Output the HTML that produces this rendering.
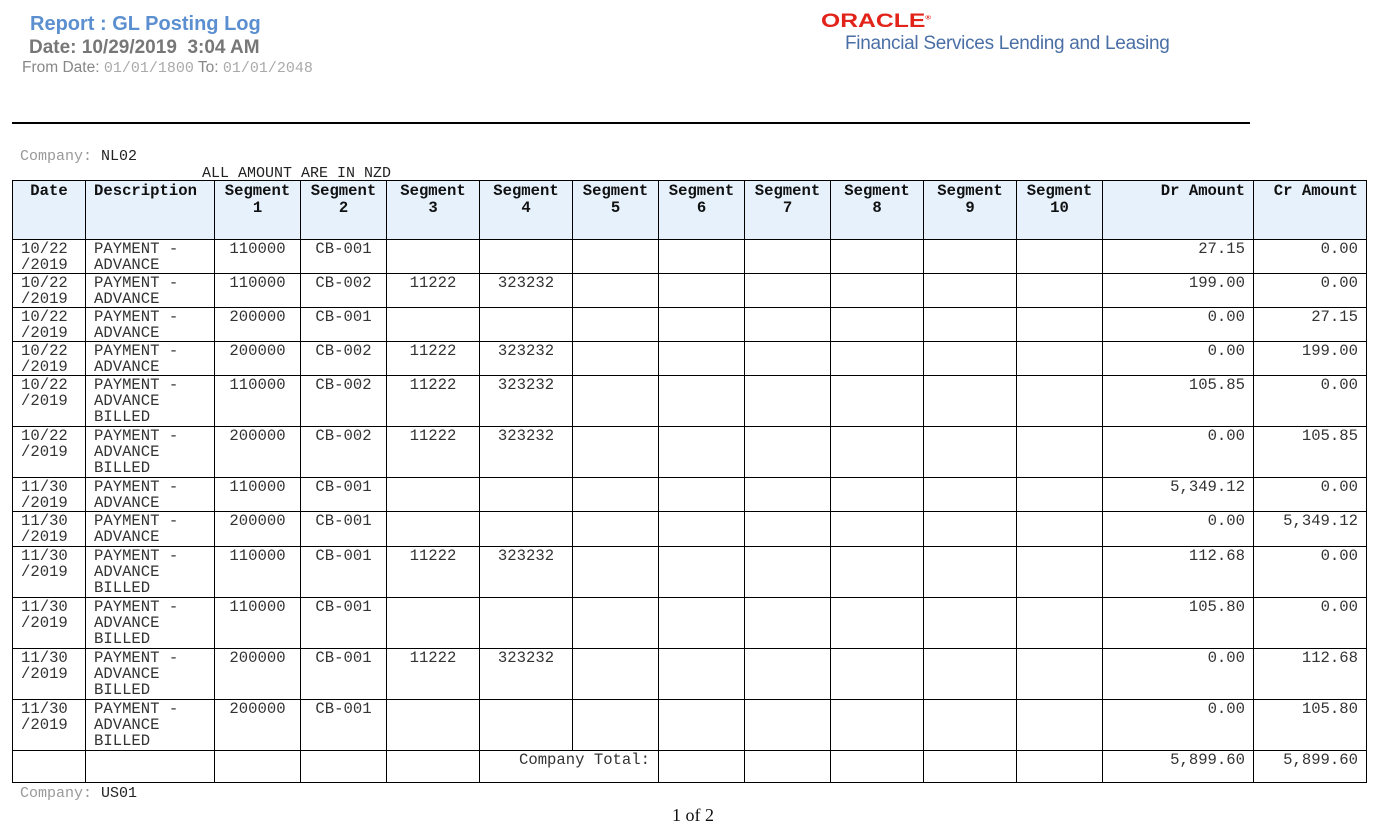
<!DOCTYPE html>
<html><head><meta charset="utf-8"><style>
body{margin:0;background:#fff;width:1383px;height:833px;position:relative;overflow:hidden;font-family:"Liberation Mono",monospace;}
.a{position:absolute;white-space:nowrap}
table{position:absolute;left:12px;top:180px;border-collapse:collapse;table-layout:fixed;width:1355px;font-size:15.6px;color:#333}
td,th{border:1px solid #000;vertical-align:top;padding:1px 8px 0 8px;line-height:16px;overflow:hidden;white-space:nowrap}
th{background:#e6f1fc;font-weight:bold;text-align:center;padding-top:2px;line-height:17px;color:#111}
.c{text-align:center}.r{text-align:right}
</style></head><body>
<div class="a" style="left:30px;top:13px;font:bold 20px 'Liberation Sans',sans-serif;color:#5b8fd0">Report : GL Posting Log</div>
<div class="a" style="left:29px;top:37px;font:bold 19px 'Liberation Sans',sans-serif;color:#777">Date: 10/29/2019&nbsp; 3:04 AM</div>
<div class="a" style="left:22px;top:59px;font:15.5px 'Liberation Sans',sans-serif;color:#888">From Date: <span style="font:15px 'Liberation Mono',monospace;color:#aaa">01/01/1800</span> To: <span style="font:15px 'Liberation Mono',monospace;color:#aaa">01/01/2048</span></div>
<div class="a" style="left:821px;top:11px;font:bold 19px 'Liberation Sans',sans-serif;color:#e2231a;transform:scaleX(1.3);transform-origin:left">ORACLE<sup style="font-size:6px">®</sup></div>
<div class="a" style="left:845px;top:33px;font:19px 'Liberation Sans',sans-serif;color:#4a6fa5;letter-spacing:-0.3px">Financial Services Lending and Leasing</div>
<div class="a" style="left:12px;top:122px;width:1238px;height:2px;background:#000"></div>
<div class="a" style="left:20px;top:148px;font-size:15px;color:#999">Company: <span style="color:#222">NL02</span></div>
<div class="a" style="left:202px;top:165px;font-size:15px;color:#222">ALL AMOUNT ARE IN NZD</div>
<table>
<colgroup><col style="width:73px"><col style="width:129px"><col style="width:86px"><col style="width:86px"><col style="width:93px"><col style="width:93px"><col style="width:86px"><col style="width:86px"><col style="width:86px"><col style="width:93px"><col style="width:93px"><col style="width:86px"><col style="width:151px"><col style="width:113px"></colgroup>
<tr style="height:59px"><th>Date</th><th style="text-align:left">Description</th><th>Segment<br>1</th><th>Segment<br>2</th><th>Segment<br>3</th><th>Segment<br>4</th><th>Segment<br>5</th><th>Segment<br>6</th><th>Segment<br>7</th><th>Segment<br>8</th><th>Segment<br>9</th><th>Segment<br>10</th><th class="r">Dr Amount</th><th class="r">Cr Amount</th></tr>
<tr style="height:34px"><td>10/22<br>/2019</td><td>PAYMENT -<br>ADVANCE</td><td class="c">110000</td><td class="c">CB-001</td><td></td><td></td><td></td><td></td><td></td><td></td><td></td><td></td><td class="r">27.15</td><td class="r">0.00</td></tr>
<tr style="height:34px"><td>10/22<br>/2019</td><td>PAYMENT -<br>ADVANCE</td><td class="c">110000</td><td class="c">CB-002</td><td class="c">11222</td><td class="c">323232</td><td></td><td></td><td></td><td></td><td></td><td></td><td class="r">199.00</td><td class="r">0.00</td></tr>
<tr style="height:34px"><td>10/22<br>/2019</td><td>PAYMENT -<br>ADVANCE</td><td class="c">200000</td><td class="c">CB-001</td><td></td><td></td><td></td><td></td><td></td><td></td><td></td><td></td><td class="r">0.00</td><td class="r">27.15</td></tr>
<tr style="height:34px"><td>10/22<br>/2019</td><td>PAYMENT -<br>ADVANCE</td><td class="c">200000</td><td class="c">CB-002</td><td class="c">11222</td><td class="c">323232</td><td></td><td></td><td></td><td></td><td></td><td></td><td class="r">0.00</td><td class="r">199.00</td></tr>
<tr style="height:51px"><td>10/22<br>/2019</td><td>PAYMENT -<br>ADVANCE<br>BILLED</td><td class="c">110000</td><td class="c">CB-002</td><td class="c">11222</td><td class="c">323232</td><td></td><td></td><td></td><td></td><td></td><td></td><td class="r">105.85</td><td class="r">0.00</td></tr>
<tr style="height:51px"><td>10/22<br>/2019</td><td>PAYMENT -<br>ADVANCE<br>BILLED</td><td class="c">200000</td><td class="c">CB-002</td><td class="c">11222</td><td class="c">323232</td><td></td><td></td><td></td><td></td><td></td><td></td><td class="r">0.00</td><td class="r">105.85</td></tr>
<tr style="height:34px"><td>11/30<br>/2019</td><td>PAYMENT -<br>ADVANCE</td><td class="c">110000</td><td class="c">CB-001</td><td></td><td></td><td></td><td></td><td></td><td></td><td></td><td></td><td class="r">5,349.12</td><td class="r">0.00</td></tr>
<tr style="height:35px"><td>11/30<br>/2019</td><td>PAYMENT -<br>ADVANCE</td><td class="c">200000</td><td class="c">CB-001</td><td></td><td></td><td></td><td></td><td></td><td></td><td></td><td></td><td class="r">0.00</td><td class="r">5,349.12</td></tr>
<tr style="height:51px"><td>11/30<br>/2019</td><td>PAYMENT -<br>ADVANCE<br>BILLED</td><td class="c">110000</td><td class="c">CB-001</td><td class="c">11222</td><td class="c">323232</td><td></td><td></td><td></td><td></td><td></td><td></td><td class="r">112.68</td><td class="r">0.00</td></tr>
<tr style="height:51px"><td>11/30<br>/2019</td><td>PAYMENT -<br>ADVANCE<br>BILLED</td><td class="c">110000</td><td class="c">CB-001</td><td></td><td></td><td></td><td></td><td></td><td></td><td></td><td></td><td class="r">105.80</td><td class="r">0.00</td></tr>
<tr style="height:51px"><td>11/30<br>/2019</td><td>PAYMENT -<br>ADVANCE<br>BILLED</td><td class="c">200000</td><td class="c">CB-001</td><td class="c">11222</td><td class="c">323232</td><td></td><td></td><td></td><td></td><td></td><td></td><td class="r">0.00</td><td class="r">112.68</td></tr>
<tr style="height:51px"><td>11/30<br>/2019</td><td>PAYMENT -<br>ADVANCE<br>BILLED</td><td class="c">200000</td><td class="c">CB-001</td><td></td><td></td><td></td><td></td><td></td><td></td><td></td><td></td><td class="r">0.00</td><td class="r">105.80</td></tr>
<tr style="height:32px"><td></td><td></td><td></td><td></td><td></td><td colspan="2" class="r">Company Total:</td><td></td><td></td><td></td><td></td><td></td><td class="r">5,899.60</td><td class="r">5,899.60</td></tr>
</table>
<div class="a" style="left:20px;top:785px;font-size:15px;color:#999">Company: <span style="color:#222">US01</span></div>
<div class="a" style="left:672px;top:805px;font:18px 'Liberation Serif',serif;color:#111">1 of 2</div>
</body></html>
